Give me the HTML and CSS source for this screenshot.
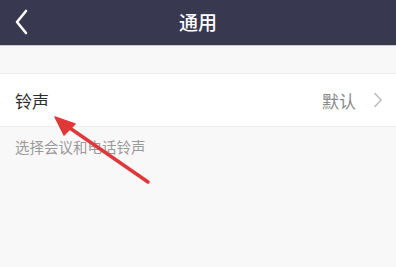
FILE: index.html
```html
<!DOCTYPE html>
<html lang="zh">
<head>
<meta charset="utf-8">
<link rel="stylesheet" href="styles.css">
</head>
<body>
<div class="page">
  <header class="nav">
    <span class="back">
      <svg width="14" height="26" viewBox="0 0 14 26"><path d="M12 2 L3 13 L12 24" fill="none" stroke="#fff" stroke-width="2.6" stroke-linecap="round" stroke-linejoin="round"/></svg>
    </span>
    <h1 class="title">通用</h1>
  </header>
  <div class="group">
    <div class="row">
      <span class="label">铃声</span>
      <span class="value">默认</span>
      <svg class="chev" width="10" height="16" viewBox="0 0 10 16"><path d="M2 1.5 L8 8 L2 14.5" fill="none" stroke="#bdbdbd" stroke-width="1.6" stroke-linecap="round" stroke-linejoin="round"/></svg>
    </div>
  </div>
  <p class="hint">选择会议和电话铃声</p>
  <svg class="arrow" width="396" height="267" viewBox="0 0 396 267">
    <line x1="148" y1="182" x2="64" y2="124" stroke="#e0383a" stroke-width="3.5" stroke-linecap="round"/>
    <path d="M55 117 L75 124 L64 135 Z" fill="#e0383a" stroke="#e0383a" stroke-width="1.5" stroke-linejoin="round"/>
  </svg>
</div>
</body>
</html>
```

FILE: styles.css
```css
* { box-sizing: border-box; }
html, body { margin: 0; padding: 0; }
body {
  width: 396px;
  height: 267px;
  overflow: hidden;
  background: #f8f8f8;
  font-family: "Noto Sans CJK SC", "Noto Sans", sans-serif;
}
.page { position: relative; width: 396px; height: 267px; }
.nav {
  height: 46px;
  background: #383850;
  border-bottom: 1px solid #c9c9d6;
  display: flex;
  align-items: center;
  justify-content: center;
  position: relative;
}
.back {
  position: absolute;
  left: 14px;
  top: 9px;
  display: flex;
}
.title {
  margin: 0;
  color: #fff;
  font-size: 19px;
  font-weight: 500;
  line-height: 1;
  margin-top: -2px;
}
.group {
  margin-top: 27px;
  background: #fff;
  border-top: 1px solid #ececec;
  border-bottom: 1px solid #ececec;
}
.row {
  height: 52px;
  display: flex;
  align-items: center;
  padding: 0 13px 0 15px;
}
.label {
  font-size: 17px;
  color: #2e2e2e;
  flex: 1;
}
.value {
  font-size: 17px;
  color: #8a8a8a;
  margin-right: 17px;
}
.chev { display: block; }
.hint {
  margin: 10px 0 0 15px;
  font-size: 14.5px;
  color: #9a9a9a;
  line-height: 20px;
}
.arrow {
  position: absolute;
  left: 0;
  top: 0;
  pointer-events: none;
}
```
